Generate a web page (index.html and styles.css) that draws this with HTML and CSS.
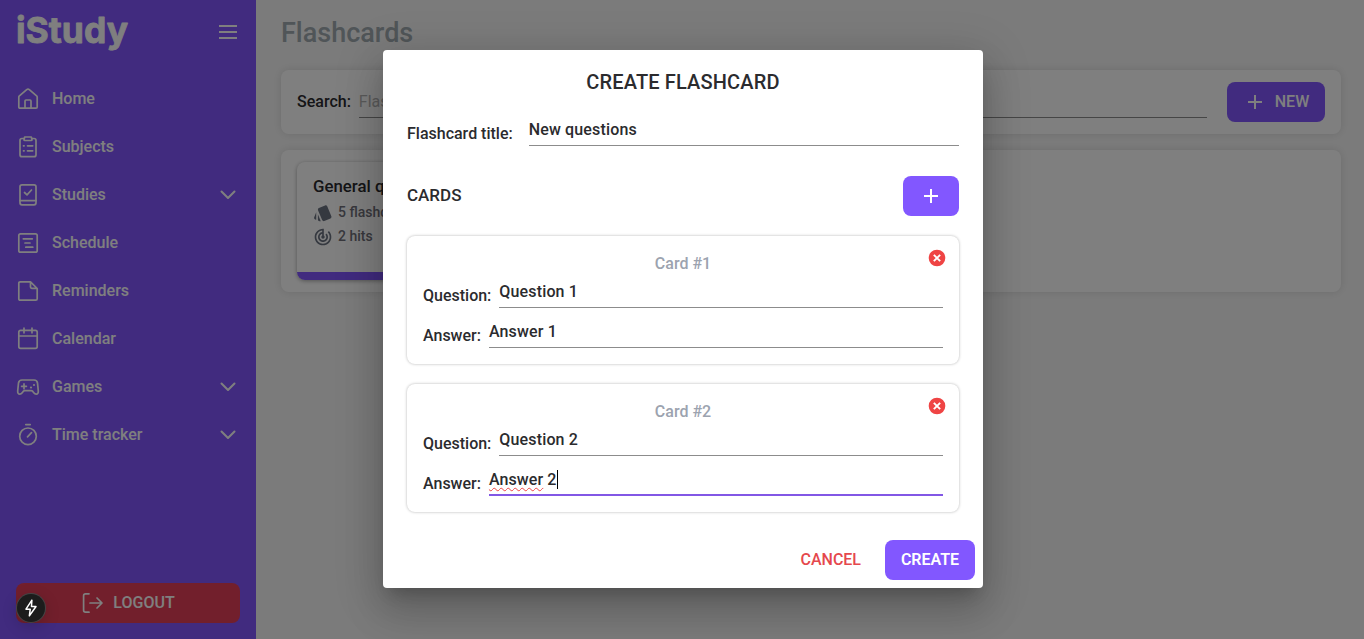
FILE: index.html
```html
<!DOCTYPE html>
<html lang="en">
<head>
<meta charset="utf-8">
<title>iStudy - Flashcards</title>
<link rel="stylesheet" href="styles.css">
</head>
<body>
<div class="app">
  <aside class="sidebar">
    <div class="brand">
      <svg class="logo" width="116" height="54" viewBox="0 0 116 54"><text x="0" y="37.500" textLength="112" lengthAdjust="spacingAndGlyphs">iStudy</text></svg>
      <svg class="icon" viewBox="0 0 24 24"><path d="M3 6h18M3 12h18M3 18h18"/></svg>
    </div>
    <nav class="menu">
      <a class="item"><svg class="icon" viewBox="0 0 24 24"><path d="M2.8 10.2Q2.8 9.4 3.4 8.9L10.7 2.7Q12 1.7 13.3 2.7L20.6 8.9Q21.2 9.4 21.2 10.2V20Q21.2 21.2 20 21.2H4Q2.8 21.2 2.8 20ZM9 21V14Q9 13 10 13H14Q15 13 15 14V21"/></svg><span>Home</span></a>
      <a class="item"><svg class="icon" viewBox="0 0 24 24"><rect x="4" y="3.5" width="16" height="18.2" rx="2"/><path class="cut" d="M8 2h8v4H8z"/><path d="M8.7 2H15.3L16 4.8Q16 5.5 15 5.5H9Q8 5.5 8 4.8ZM7.500 10.800h.6M11.500 10.800h5.2M7.500 15.800h.6M11.500 15.800h5.2"/></svg><span>Subjects</span></a>
      <a class="item"><svg class="icon" viewBox="0 0 24 24"><rect x="4" y="1.8" width="16" height="20" rx="2"/><path d="M4 17.7h16M8.5 9.5l2.5 2.3L15.5 7"/></svg><span>Studies</span><svg class="icon chevron" viewBox="0 0 24 24"><path d="M5.5 8.500l6.5 6.5L18.5 8.500"/></svg></a>
      <a class="item"><svg class="icon" viewBox="0 0 24 24"><rect x="2.8" y="2.8" width="18.4" height="18.4" rx="1.8"/><path d="M7.3 7.8h9M9 12h5M9.8 16.2h7"/></svg><span>Schedule</span></a>
      <a class="item"><svg class="icon" viewBox="0 0 24 24"><path d="M4.3 2.8H14.5L21.2 9.5V19.7Q21.2 21.2 19.7 21.2H4.3Q2.8 21.2 2.8 19.7V4.3Q2.8 2.8 4.3 2.8ZM14.5 3V8Q14.5 9.3 15.8 9.3H21"/></svg><span>Reminders</span></a>
      <a class="item"><svg class="icon" viewBox="0 0 24 24"><rect x="2.8" y="3.4" width="18.4" height="18" rx="1.8"/><path d="M3 9h18M8 1.2v4.600M16 1.2v4.600"/></svg><span>Calendar</span></a>
      <a class="item"><svg class="icon" viewBox="0 0 24 24"><path d="M6 5H18Q21 5 21.5 8L22.3 16Q22.4 19.2 20.2 19.2Q18.8 19.2 17.8 17.8L16.6 16.2Q16 15.6 15 15.6H9Q8 15.6 7.4 16.2L6.2 17.8Q5.2 19.2 3.8 19.2Q1.6 19.2 1.7 16L2.5 8Q3 5 6 5ZM5.6 11.3h4.800M8 8.900v4.800"/><circle class="dot" cx="18" cy="10" r="1.1"/><circle class="dot" cx="15" cy="12.5" r="1.1"/></svg><span>Games</span><svg class="icon chevron" viewBox="0 0 24 24"><path d="M5.5 8.500l6.5 6.5L18.5 8.500"/></svg></a>
      <a class="item"><svg class="icon" viewBox="0 0 24 24"><circle cx="12" cy="13.3" r="8.3"/><path d="M9.8 1.6h4.4M11.5 13.800L15.5 9.700"/></svg><span>Time tracker</span><svg class="icon chevron" viewBox="0 0 24 24"><path d="M5.5 8.500l6.5 6.5L18.5 8.500"/></svg></a>
    </nav>
    <button class="logout"><svg class="icon" viewBox="0 0 24 24"><path d="M9 2.8H5.5Q3.6 2.8 3.6 4.7V19.3Q3.6 21.2 5.5 21.2H9M10 12H21.5M17 7l5 5-5 5"/></svg><span>LOGOUT</span></button>
  </aside>
  <main class="page">
    <h1>Flashcards</h1>
    <section class="panel search">
      <label>Search:</label>
      <div class="query">Flashcard title</div>
      <button class="primary new"><svg class="plus" viewBox="0 0 24 24"><path d="M12 5v14M5 12h14"/></svg>NEW</button>
    </section>
    <section class="panel list">
      <article class="deck">
        <h2>General questions</h2>
        <p><svg class="meta" viewBox="0 0 24 24"><path d="M2.53 19.65l1.34.56v-9.03l-2.43 5.86c-.41 1.02.08 2.19 1.09 2.61zm19.5-3.7L17.07 3.98c-.31-.75-1.04-1.21-1.81-1.23-.26 0-.53.04-.79.15L7.1 5.95c-.75.31-1.21 1.03-1.23 1.8-.01.27.04.54.15.8l4.96 11.97c.31.76 1.05 1.22 1.83 1.23.26 0 .52-.05.77-.15l7.36-3.05c1.02-.42 1.51-1.59 1.09-2.6zM5.88 19.75c0 1.1.9 2 2 2h1.45l-3.45-8.34v6.34z"/></svg>5 flashcards</p>
        <p><svg class="meta" viewBox="0 0 24 24"><path d="M19.07 4.93l-1.41 1.41C19.1 7.79 20 9.79 20 12c0 4.42-3.58 8-8 8s-8-3.58-8-8c0-4.08 3.05-7.44 7-7.93v2.02C8.16 6.57 6 9.03 6 12c0 3.31 2.69 6 6 6s6-2.69 6-6c0-1.66-.67-3.16-1.76-4.24l-1.41 1.41C15.55 9.9 16 10.9 16 12c0 2.21-1.79 4-4 4s-4-1.79-4-4c0-1.86 1.28-3.41 3-3.86v2.14c-.6.35-1 .98-1 1.72 0 1.1.9 2 2 2s2-.9 2-2c0-.74-.4-1.38-1-1.72V2h-1C6.48 2 2 6.48 2 12s4.480 10 10 10 10-4.480 10-10c0-2.760-1.120-5.260-2.930-7.070z"/></svg>2 hits</p>
      </article>
    </section>
  </main>
</div>

<div class="backdrop">
  <div class="dialog">
    <h2 class="dialog-title">CREATE FLASHCARD</h2>
    <div class="dialog-body">
      <div class="field title-field"><label>Flashcard title:</label><div class="input">New questions</div></div>
      <div class="cards-head"><span>CARDS</span><button class="primary add"><svg class="plus" viewBox="0 0 24 24"><path d="M12 5v14M5 12h14"/></svg></button></div>
      <div class="cards">
        <section class="card">
          <svg class="remove" viewBox="0 0 24 24"><circle cx="12" cy="12" r="10"/><path d="M8.2 8.2l7.6 7.6M15.8 8.2l-7.6 7.6"/></svg>
          <h3>Card #1</h3>
          <div class="field"><label>Question:</label><div class="input">Question 1</div></div>
          <div class="field"><label>Answer:</label><div class="input">Answer 1</div></div>
        </section>
        <section class="card">
          <svg class="remove" viewBox="0 0 24 24"><circle cx="12" cy="12" r="10"/><path d="M8.2 8.2l7.6 7.6M15.8 8.2l-7.6 7.6"/></svg>
          <h3>Card #2</h3>
          <div class="field"><label>Question:</label><div class="input">Question 2</div></div>
          <div class="field"><label>Answer:</label><div class="input focused"><span class="misspelled">Answer</span>&nbsp;2<i class="caret"></i></div></div>
        </section>
      </div>
    </div>
    <div class="actions"><button class="cancel">CANCEL</button><button class="primary create">CREATE</button></div>
  </div>
</div>
<div class="devtool"><svg viewBox="0 0 24 24"><path d="M13.2 1.500L5.3 13.500H11L9.8 22.5L18.7 10H12.600Z"/></svg></div>
</body>
</html>
```
FILE: styles.css
```css
* { box-sizing: border-box; margin: 0; }
body { font: 500 16px/24px Roboto, sans-serif; color: #2b2b2e; overflow: hidden; }
button { font: inherit; border: 0; padding: 0; display: flex; align-items: center; justify-content: center; }
h1, h2, h3 { font-weight: 500; }

.app { display: flex; height: 639px; background: #f7f7f7; }
.icon { width: 24px; height: 24px; flex: none; fill: none; stroke: currentColor; stroke-width: 1.7; stroke-linecap: round; stroke-linejoin: round; }
.sidebar { width: 256px; flex: none; display: flex; flex-direction: column; padding: 5px 16px 16px; background: #8257ff; color: #fff; }
.brand { display: flex; align-items: center; justify-content: space-between; height: 54px; }
.logo text { font: 700 36px Inter, sans-serif; fill: #fff; stroke: #fff; stroke-width: .8; stroke-linejoin: round; }
.brand .icon { stroke-linecap: butt; stroke-width: 2; }
.menu { display: flex; flex-direction: column; margin-top: 16px; flex: 1; }
.item { height: 48px; display: flex; align-items: center; gap: 12px; }
.chevron { margin-left: auto; stroke-width: 2; }
.cut { fill: #8257ff; stroke: none; }
.dot { fill: currentColor; stroke: none; }
.logout { height: 40px; border-radius: 8px; background: #e53e58; color: #fff; gap: 9px; padding-right: 1px; }

.page { flex: 1; padding: 16px 23px 0 25px; }
h1 { font-size: 27px; line-height: 34px; color: #a0aab0; }
.panel { background: #fff; border-radius: 8px; box-shadow: 0 0 10px rgba(0, 0, 0, .12); }
.search { margin-top: 20px; height: 64px; padding: 0 16px; display: flex; align-items: center; }
.query { flex: 1; height: 32px; margin: 0 20px 0 8px; padding-top: 4px; border-bottom: 1px solid #8c8c8c; color: #b5b5b5; font-weight: 400; }
.new { width: 98px; gap: 8px; }
.list { margin-top: 16px; height: 142px; padding: 12px 16px; }
.deck { width: 250px; height: 118px; padding: 12px 16px 0; border-radius: 8px; border-bottom: 8px solid #8257ff; box-shadow: 0 1px 4px rgba(0, 0, 0, .35); }
.deck h2 { font-size: 16.8px; line-height: 25px; }
.deck p { display: flex; align-items: center; gap: 5px; height: 24px; font-size: 14px; line-height: 20px; color: #71717a; padding-top: 2px; }
.meta { width: 20px; height: 20px; fill: #6b7280; margin-top: 2px; }

.primary { height: 40px; border-radius: 8px; background: #8257ff; color: #fff; }
.plus { width: 24px; height: 24px; fill: none; stroke: currentColor; stroke-width: 2; }

.backdrop { position: absolute; inset: 0; display: flex; justify-content: center; align-items: center; padding: 0 0 1px 2px; background: rgba(0, 0, 0, .5); }
.dialog { width: 600px; height: 538px; background: #fff; border-radius: 4px; box-shadow: 0 11px 15px -7px rgba(0, 0, 0, .2), 0 24px 38px 3px rgba(0, 0, 0, .14), 0 9px 46px 8px rgba(0, 0, 0, .12); }
.dialog-title { padding: 16px 24px; font-size: 20px; line-height: 32px; text-align: center; letter-spacing: .15px; }
.dialog-body { padding: 0 24px; }
.field { display: flex; align-items: flex-end; gap: 8px; height: 32px; }
.title-field { gap: 16px; }
.field label { line-height: 25px; }
.input { flex: 1; height: 32px; padding-top: 4px; line-height: 23px; border-bottom: 1px solid #8c8c8c; display: flex; letter-spacing: .15px; }
.focused { border-bottom: 2px solid #8257e5; letter-spacing: .1px; }
.misspelled { text-decoration: underline wavy #ef4444 1px; text-decoration-skip-ink: none; text-underline-offset: 2px; }
.caret { width: 1px; height: 19px; margin-top: 2px; background: #000; }
.cards-head { display: flex; justify-content: space-between; align-items: center; margin: 30px 0 20px; font-size: 17px; }
.cards-head span { padding-bottom: 2px; }
.add { width: 56px; }
.cards { display: flex; flex-direction: column; gap: 20px; }
.card { position: relative; height: 128px; padding: 16px; border-radius: 8px; box-shadow: 0 0 3px rgba(0, 0, 0, .3); }
.card h3 { font-size: 16px; text-align: center; color: #9ca3af; }
.card .field + .field { margin-top: 8px; }
.remove { position: absolute; top: 12px; right: 12px; width: 20px; height: 20px; fill: #ef4444; stroke: #fff; stroke-width: 2.3; }
.remove circle { stroke: none; }
.actions { display: flex; justify-content: flex-end; padding: 28px 8px 0; gap: 8px; }
.cancel { padding: 0 16px; background: none; color: #e5484d; }
.create { width: 90px; font-weight: 600; }

.devtool { position: absolute; left: 17px; top: 594px; width: 28px; height: 28px; border-radius: 50%; background: #1c1c1c; box-shadow: 0 0 0 1px #444, 0 4px 16px rgba(0, 0, 0, .2); display: grid; place-items: center; }
.devtool svg { width: 18px; height: 18px; margin-right: 1px; fill: none; stroke: #fff; stroke-width: 2; stroke-linejoin: round; }
```
